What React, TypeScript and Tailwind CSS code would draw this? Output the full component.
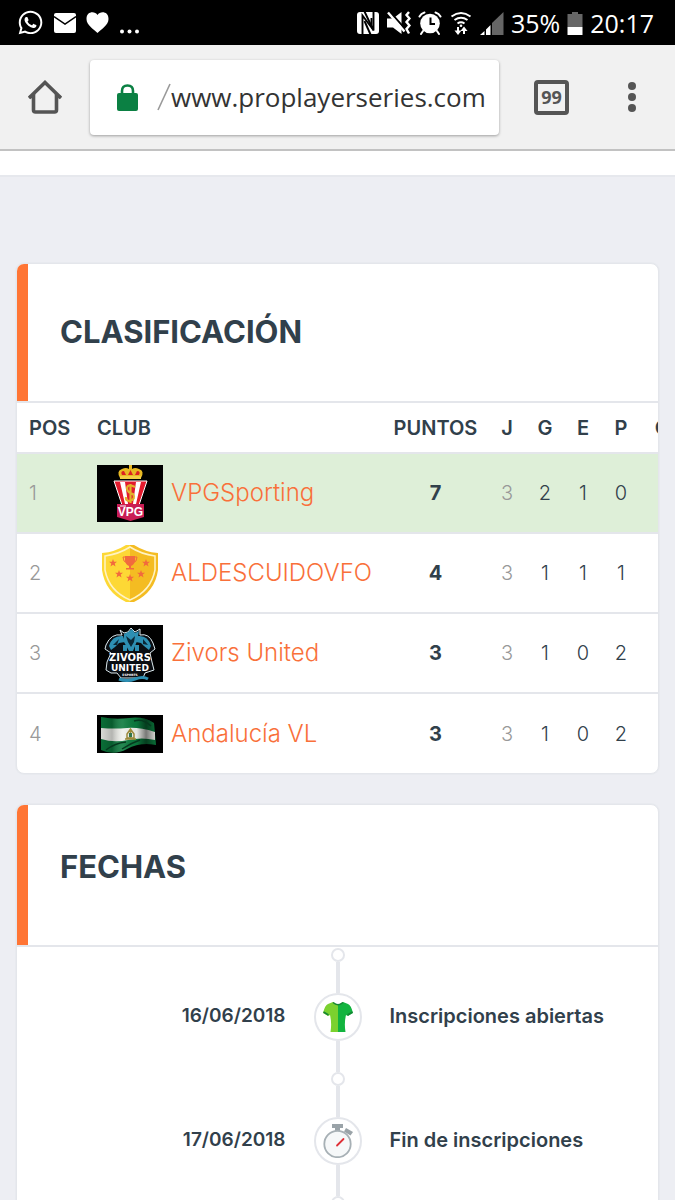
import type { ReactNode } from "react";
import { FaWhatsapp } from "react-icons/fa";

const SANS = "font-['Inter','Noto_Sans',sans-serif]";

function NfcIcon() {
  return (
    <svg viewBox="0 0 24 24" className="h-6 w-6">
      <rect x="1" y="1" width="22" height="22" rx="3" fill="#fff" />
      <g fill="none" stroke="#000" strokeWidth="1.900">
        <path d="M6.500 23.500V4.500L15.500 16.500V7" />
        <path d="M8.500 .5L17.500 19.500V.5" />
        <path d="M8.500 10L14.500 23.500" />
      </g>
    </svg>
  );
}

function MuteVibrateIcon() {
  return (
    <svg viewBox="0 0 24 24" className="h-6 w-6" fill="none" stroke="#fff">
      <path d="M0 7.500H6L14.500 1V23L6 16.500H0Z" fill="#fff" stroke="none" />
      <path d="M3 1L19 19" stroke="#000" strokeWidth="2" />
      <path d="M1 1.500L17.500 20.500" strokeWidth="2.400" />
      <path d="M22 1L19.500 4L22.500 7.500L19.500 11L22.500 14.500L19.500 18L22 22.500" strokeWidth="2.400" />
    </svg>
  );
}

function AlarmIcon() {
  return (
    <svg viewBox="0 0 24 24" className="h-6 w-6" fill="none" stroke="#fff" strokeWidth="2">
      <circle cx="12" cy="12.500" r="9.800" fill="#fff" stroke="none" />
      <path d="M1.500 5.500Q3 2.500 6.500 1.500M22.500 5.500Q21 2.500 17.500 1.500M5 20L3 23M19 20L21 23" strokeLinecap="round" />
      <path d="M12.500 6.500V13H17" stroke="#000" />
    </svg>
  );
}

function WifiIcon() {
  return (
    <svg viewBox="0 0 22 24" className="h-6 w-6" fill="none" stroke="#fff" strokeWidth="2">
      <path d="M1.500 5.500Q11-1.500 20.500 5.500M4.500 9Q11 4.500 17.500 9M7.500 12.500Q11 10 14.500 12.500" />
      <circle cx="11" cy="14.800" r="1.300" fill="#fff" stroke="none" />
      <path d="M8 16V20M14 19V23" />
      <path d="M4.500 19.500H11.500L8 24ZM10.500 20L14 15.500L17.500 20Z" fill="#fff" stroke="none" />
    </svg>
  );
}

function SignalIcon() {
  return (
    <svg viewBox="0 0 24 24" className="h-6 w-6">
      <path fill="#666" d="M12 12L23.500 1V24H12Z" />
      <path fill="#fff" d="M0 24L4.500 20V24ZM6 18.500L10.500 14V24H6Z" />
    </svg>
  );
}

function BatteryIcon() {
  return (
    <svg viewBox="0 0 16 24" className="h-6 w-4">
      <path fill="#666" d="M5 1H11V3H15.500V16H0.500V3H5Z" />
      <path fill="#fff" d="M.5 16H15.500V24H.5Z" />
    </svg>
  );
}

function StatusBar() {
  return (
    <div className="flex h-[45px] shrink-0 items-center justify-between bg-black pl-[17px] pr-[21px] text-white">
      <div className="flex items-center gap-2.5">
        <FaWhatsapp className="h-[27px] w-[27px]" />
        <svg viewBox="0 0 22 20" className="h-5 w-[22px]">
          <path fill="#fff" d="M2 0H20Q22 0 22 2V18Q22 20 20 20H2Q0 20 0 18V2Q0 0 2 0Z" />
          <path fill="none" stroke="#000" strokeWidth="1.500" d="M0 3.500L11 11L22 3.500" />
        </svg>
        <svg viewBox="0 0 22 21" className="h-[21px] w-[23px]">
          <path fill="#fff" d="M11 3C8.500-1 0-1 0 7C0 13 7 17 11 21C15 17 22 13 22 7C22-1 13.500-1 11 3Z" />
        </svg>
        <svg viewBox="0 0 20 24" className="h-6 w-5" fill="#fff">
          <circle cx="3" cy="20.500" r="2" />
          <circle cx="10.500" cy="20.500" r="2" />
          <circle cx="18" cy="20.500" r="2" />
        </svg>
      </div>
      <div className="flex items-center gap-[7px] font-['Open_Sans',sans-serif] text-[25px] leading-8">
        <NfcIcon />
        <MuteVibrateIcon />
        <AlarmIcon />
        <WifiIcon />
        <SignalIcon />
        <span>35%</span>
        <BatteryIcon />
        <span>20:17</span>
      </div>
    </div>
  );
}

function BrowserBar() {
  return (
    <header className="flex h-[106px] shrink-0 items-center border-b-2 border-[#c2c2c2] bg-[#f1f1f1]">
      <button type="button" aria-label="Inicio" className="flex w-[90px] justify-center">
        <svg viewBox="0 0 34 34" className="h-[34px] w-[34px]" fill="none" stroke="#555" strokeWidth="3.600">
          <path d="M1 18L17 2.500L33 18" strokeLinejoin="miter" />
          <path d="M5.500 14V30Q5.500 32 7.500 32H26.500Q28.500 32 28.500 30V14" />
          <path d="M1 17H6M28 17H33" strokeWidth="2.500" />
        </svg>
      </button>
      <div className="flex h-[75px] min-w-0 flex-1 items-center rounded bg-white pl-[27px] pr-3 shadow-[0_1px_3px_rgba(0,0,0,0.35)]">
        <svg viewBox="0 0 21 27" className="h-[27px] w-[21px] shrink-0">
          <path fill="none" stroke="#0b8043" strokeWidth="2.600" d="M5 12V7Q5 1.500 10.500 1.500T16 7V12" />
          <rect x="0" y="9" width="21" height="18" rx="2" fill="#0b8043" />
        </svg>
        <svg viewBox="0 0 14 28" className="ml-[19px] h-7 w-3.5 shrink-0">
          <path stroke="#999" strokeWidth="1.600" d="M1 27L13 1" />
        </svg>
        <input
          type="text"
          aria-label="Dirección"
          defaultValue="www.proplayerseries.com"
          className="min-w-0 flex-1 bg-transparent font-['Open_Sans',sans-serif] text-[26px] font-medium leading-9 text-[#333] outline-none"
        />
      </div>
      <button type="button" aria-label="Pestañas" className="ml-[35px] flex h-[35px] w-[35px] items-center justify-center rounded border-4 border-[#555] font-['Liberation_Sans_Narrow','Open_Sans',sans-serif] text-lg font-bold leading-5 text-[#555]">
        99
      </button>
      <button type="button" aria-label="Menú" className="mr-[23px] ml-[43px] flex w-10 justify-center">
        <svg viewBox="0 0 10 32" className="h-8 w-2.5" fill="#555">
          <circle cx="5" cy="5" r="4" />
          <circle cx="5" cy="16" r="4" />
          <circle cx="5" cy="27" r="4" />
        </svg>
      </button>
    </header>
  );
}

function SportingCrest() {
  return (
    <svg viewBox="0 0 66 57" className="h-[57px] w-[66px]">
      <rect width="66" height="57" fill="#000" />
      <path fill="#e8b923" d="M23 13Q19 6 25 4Q29 2 32 4V0H35V4Q38 2 42 4Q48 6 44 13Z" />
      <path fill="#d22" d="M25 10Q23 6 27 6L29 10ZM31 10L33.500 5L36 10ZM38 10L40 6Q44 6 42 10Z" />
      <path fill="#f3cf45" d="M23 11H44V14H23Z" />
      <path fill="#e31b2e" stroke="#fff" strokeWidth="1" d="M17 16H50L42 40H25Z" />
      <path fill="#fff" d="M23 17H28L31 39H28ZM39 17H44L39 39H36Z" />
      <path fill="none" stroke="#e3b12b" strokeWidth="2.200" d="M38 22Q30 18 30 24Q31 28 36 29Q39 34 33 36Q28 36 29 32M33.500 19V38" />
      <path fill="#c91d55" d="M20 39H47V52L33.500 56L20 52Z" />
      <text x="33.500" y="51" textAnchor="middle" fill="#fff" fontFamily="Liberation Sans" fontWeight="700" fontSize="12">VPG</text>
      <path stroke="#fff" strokeWidth="1" d="M23 41H29" />
    </svg>
  );
}

const STARS = [
  [16, 18],
  [49, 18],
  [22, 29],
  [33, 33],
  [44, 29],
];

function ShieldCrest() {
  return (
    <svg viewBox="0 0 66 57" className="h-[57px] w-[66px]">
      <path fill="#fdd835" d="M33 0H29Q18 7 5 8V25Q8 47 29 57H33Z" />
      <path fill="#f4bc22" d="M33 0H37Q48 7 61 8V25Q58 47 37 57H33Z" />
      <path fill="none" stroke="#fff3c4" strokeWidth="1.500" d="M33 2Q22 9 8 11V25Q12 46 33 55Q54 46 58 25V11Q44 9 33 2Z" />
      <g fill="#f26a3d">
        <path d="M28 11H38V16Q37 20 34 21V23H37V24.500H29V23H32V21Q29 20 28 16Z" />
        <path fill="none" stroke="#f26a3d" d="M28 12H26Q26 17 30 18M38 12H40Q40 17 36 18" />
        {STARS.map(([x, y]) => (
          <path key={`${x}-${y}`} transform={`translate(${x} ${y})`} d="M0-4L1-1.200H4L1.700.6L2.500 3.500L0 1.800L-2.500 3.500L-1.700.6L-4-1.200H-1Z" />
        ))}
      </g>
    </svg>
  );
}

function ZivorsCrest() {
  return (
    <svg viewBox="0 0 66 57" className="h-[57px] w-[66px]">
      <rect width="66" height="57" fill="#000" />
      <path fill="#0a0e13" stroke="#dbe9ee" strokeWidth="1" d="M27 8L23 5L25 10Q14 8 9 20L8 24L14 28L10 37L9 45L14 48L20 48L24 53H46L48 48L57 45L55 37L53 28L58 24L56 18Q52 8 43 10L43 4L38 7L34 3L31 7Z" />
      <path fill="#2d8fb3" d="M27 9L31 7L35 4L38 8L42 6L40 16L36 26H32L27 17ZM12 21Q15 10 26 11L28 17L22 18L18 22L14 25ZM41 11Q51 10 54 21L52 25L47 21L44 18L39 17Z" />
      <path fill="#0b2736" d="M29 11L34 15L38 11L37 17L34 22L31 17ZM16 20L22 14L20 20ZM46 14L51 20L46 19Z" />
      <path fill="#2d8fb3" d="M26 20H30V26H26ZM38 20H42V26H38Z" />
      <path fill="none" stroke="#2d8fb3" strokeWidth="3" d="M22 54Q30 57 38 54T51 54" />
      <g fill="#fff" fontFamily="DejaVu Sans" fontWeight="700" textAnchor="middle">
        <text x="33" y="36" fontSize="10">ZIVORS</text>
        <text x="33" y="46" fontSize="9">UNITED</text>
        <text x="33" y="51" fontSize="3">ESPORTS</text>
      </g>
    </svg>
  );
}

function AndaluciaFlag() {
  return (
    <svg viewBox="0 0 66 38" className="h-[38px] w-[66px]">
      <defs>
        <linearGradient id="fold">
          <stop offset="0" stopColor="#000" stopOpacity=".1" />
          <stop offset=".2" stopColor="#000" stopOpacity=".25" />
          <stop offset=".4" stopColor="#fff" stopOpacity=".1" />
          <stop offset=".65" stopColor="#000" stopOpacity=".05" />
          <stop offset=".82" stopColor="#000" stopOpacity=".5" />
          <stop offset="1" stopColor="#000" stopOpacity=".1" />
        </linearGradient>
      </defs>
      <rect width="66" height="38" fill="#000" />
      <path fill="#0b7a3d" d="M4 2Q18 5 32 3T57 8L59 30Q43 27 30 34T4 35Z" />
      <path fill="#f0f1ec" d="M4 13Q18 14 30 13T58 17V25Q45 22 31 25T4 24Z" />
      <path fill="url(#fold)" d="M4 2Q18 5 32 3T57 8L59 30Q43 27 30 34T4 35Z" />
      <path fill="none" stroke="#06391f" strokeWidth="1.500" d="M9 35Q18 28 29 27M25 34Q34 28 43 25M37 6Q46 3 54 11" />
      <path fill="none" stroke="#9c8a3b" strokeWidth="1.500" d="M30 23V19L33.500 14L37 19V23ZM28 24H39M33.500 14V23" />
      <path fill="#31764c" d="M32 18H35V22H32Z" />
    </svg>
  );
}

function JerseyIcon() {
  return (
    <svg viewBox="0 0 30 30" className="h-[30px] w-[30px]">
      <path fill="#7bd12f" d="M10 0L15 3V30H7.500Q9 21 7 13L5 14L0 11Q2 3 5 2Z" />
      <path fill="#12b43f" d="M20 0L15 3V30H22.500Q21 21 23 13L25 14L30 11Q28 3 25 2Z" />
      <path fill="none" stroke="#168535" strokeWidth="1.500" d="M10 .5Q15 5 20 .5M.5 10L5.500 13M29.500 10L24.500 13" />
    </svg>
  );
}

function StopwatchIcon() {
  return (
    <svg viewBox="0 0 30 34" className="h-[34px] w-[30px]">
      <path fill="#9aa3a8" d="M9 0H20V4H9ZM12 4H17V7H12Z" />
      <path fill="#9aa3a8" d="M23 4L30 8L27.500 11.500L21 7.500Z" />
      <circle cx="14.500" cy="20" r="13.200" fill="#f6f8f9" stroke="#a7b0b5" strokeWidth="1.800" />
      <path stroke="#df3037" strokeWidth="1.800" strokeLinecap="round" d="M14 21.500L20.500 15" />
    </svg>
  );
}

interface Team {
  name: string;
  crest: ReactNode;
  points: number;
  stats: number[];
}

const TEAMS: Team[] = [
  { name: "VPGSporting", crest: <SportingCrest />, points: 7, stats: [3, 2, 1, 0] },
  { name: "ALDESCUIDOVFO", crest: <ShieldCrest />, points: 4, stats: [3, 1, 1, 1] },
  { name: "Zivors United", crest: <ZivorsCrest />, points: 3, stats: [3, 1, 0, 2] },
  { name: "Andalucía VL", crest: <AndaluciaFlag />, points: 3, stats: [3, 1, 0, 2] },
];

function Card({ title, headingClass, children }: { title: string; headingClass: string; children: ReactNode }) {
  return (
    <section className="overflow-hidden rounded-lg border border-[#e4e6eb] bg-white shadow-[0_0_0_1px_#e8eaef]">
      <div className="flex border-b-2 border-[#e4e6eb]">
        <div className="w-[11px] bg-[#ff7534]" />
        <h2 className={`pl-8 text-[31px] font-bold leading-9 text-[#31404b] ${headingClass}`}>{title}</h2>
      </div>
      {children}
    </section>
  );
}

function Standings() {
  return (
    <div className="overflow-x-auto [scrollbar-width:none]">
      <table className="w-full min-w-[679px] table-fixed border-collapse text-xl leading-6 text-[#31404b]">
        <colgroup>
          <col className="w-[68px]" />
          <col />
          <col className="w-[105px]" />
          <col className="w-[38px]" />
          <col className="w-[38px]" />
          <col className="w-[38px]" />
          <col className="w-[38px]" />
          <col className="w-[56px]" />
        </colgroup>
        <thead>
          <tr className="h-[50px] border-b-2 border-[#e4e6eb]">
            <th scope="col" className="pl-3 text-left font-semibold">POS</th>
            <th scope="col" className="pl-3 text-left font-semibold">CLUB</th>
            {["PUNTOS", "J", "G", "E", "P", "GF"].map((label) => (
              <th key={label} scope="col" className="text-center font-semibold">{label}</th>
            ))}
          </tr>
        </thead>
        <tbody>
          {TEAMS.map((team, index) => (
            <tr
              key={team.name}
              className={`h-20 border-[#e4e6eb] ${index < TEAMS.length - 1 ? "border-b-2" : ""} ${index === 0 ? "bg-[#deefd8]" : ""}`}
            >
              <td className="pl-3 font-light text-[#999]">{index + 1}</td>
              <td className="pl-3">
                <div className="flex items-center gap-2">
                  {team.crest}
                  <a href="#club" className="whitespace-nowrap text-2xl font-light leading-7 text-[#f9703a]">{team.name}</a>
                </div>
              </td>
              <td className="text-center font-bold">{team.points}</td>
              {team.stats.map((value, column) => (
                <td key={column} className={`text-center font-light ${column === 0 ? "text-[#999]" : ""}`}>{value}</td>
              ))}
              <td />
            </tr>
          ))}
        </tbody>
      </table>
    </div>
  );
}

const DATES = [
  { date: "16/06/2018", label: "Inscripciones abiertas", icon: <JerseyIcon /> },
  { date: "17/06/2018", label: "Fin de inscripciones", icon: <StopwatchIcon /> },
];

function Dot() {
  return <span className="h-3.5 w-3.5 shrink-0 rounded-full border-2 border-[#e4e6eb] bg-white" />;
}

function Timeline() {
  return (
    <ol className="pt-px font-semibold leading-6 text-[#31404b]">
      {DATES.map((entry) => (
        <li key={entry.date} className="grid grid-cols-[1fr_48px_1fr] items-center gap-x-7">
          <time className="pt-3 text-right text-[19px]">{entry.date}</time>
          <div className="flex flex-col items-center">
            <Dot />
            <span className="h-[31px] w-1 bg-[#e4e6eb]" />
            <span className="flex h-12 w-12 items-center justify-center rounded-full border-2 border-[#e4e6eb] bg-white">{entry.icon}</span>
            <span className="h-[31px] w-1 bg-[#e4e6eb]" />
          </div>
          <p className="pt-3 text-xl leading-6">{entry.label}</p>
        </li>
      ))}
      <li className="flex justify-center pb-8">
        <Dot />
      </li>
    </ol>
  );
}

export default function App() {
  return (
    <div className={`flex h-screen flex-col bg-[#edeef3] ${SANS}`}>
      <StatusBar />
      <BrowserBar />
      <main className="min-h-0 flex-1 overflow-y-auto [scrollbar-width:none]">
        <div className="h-[26px] border-b-2 border-[#e6e8ed] bg-white" />
        <div className="flex flex-col gap-[30px] px-4 pt-[86px] pb-8">
          <Card title="CLASIFICACIÓN" headingClass="pt-[50px] pb-[51px]">
            <Standings />
          </Card>
          <Card title="FECHAS" headingClass="pt-11 pb-[60px]">
            <Timeline />
          </Card>
        </div>
      </main>
    </div>
  );
}
